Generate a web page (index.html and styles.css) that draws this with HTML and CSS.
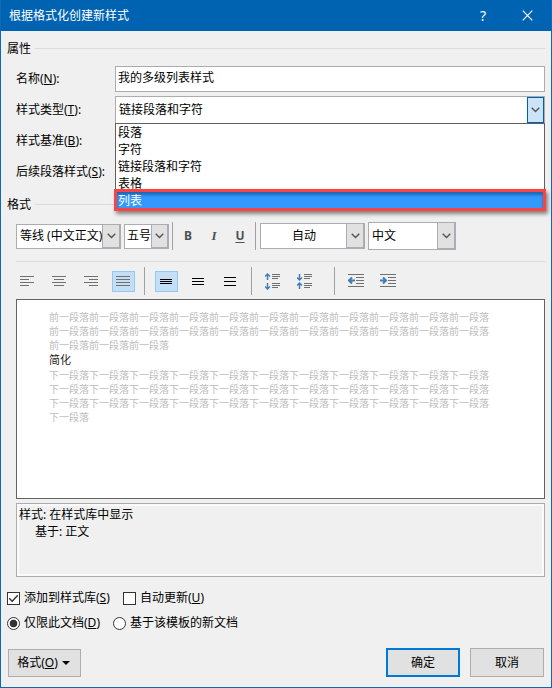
FILE: index.html
```html
<!DOCTYPE html>
<html lang="zh-CN">
<head>
<meta charset="utf-8">
<title>根据格式化创建新样式</title>
<link rel="stylesheet" href="styles.css">
</head>
<body>
<main class="dialog">
  <header class="titlebar">
    <span class="title">根据格式化创建新样式</span>
    <span class="help">?</span>
    <svg class="close" width="11" height="11" viewBox="0 0 11 11"><path d="M.7.7l9.6 9.6M10.3.7L.7 10.3"/></svg>
  </header>

  <div class="group group-props"><span>属性</span><i></i></div>
  <div class="fields">
    <label>名称(<u>N</u>):</label>
    <div class="input">我的多级列表样式</div>
    <label class="type-label">样式类型(<u>T</u>):</label>
    <div class="select">
      <span>链接段落和字符</span>
      <b class="drop"><svg width="9" height="6" viewBox="0 0 9 6"><path d="M.7.8l3.8 3.8L8.3.8"/></svg></b>
      <ul class="menu">
        <li>段落</li><li>字符</li><li>链接段落和字符</li><li>表格</li>
        <li class="chosen">列表</li>
      </ul>
    </div>
    <label class="lower">样式基准(<u>B</u>):</label>
    <label class="lower">后续段落样式(<u>S</u>):</label>
  </div>

  <div class="group group-format"><span>格式</span><i></i></div>
  <div class="fontbar">
    <div class="combo c-font"><span>等线 (中文正文)</span><b><svg width="9" height="6" viewBox="0 0 9 6"><path d="M.7.8l3.8 3.8L8.3.8"/></svg></b></div>
    <div class="combo c-size"><span>五号</span><b><svg width="9" height="6" viewBox="0 0 9 6"><path d="M.7.8l3.8 3.8L8.3.8"/></svg></b></div>
    <i class="sep"></i>
    <span class="fmt bold">B</span><span class="fmt italic">I</span><span class="fmt under">U</span>
    <i class="sep sep-two"></i>
    <div class="combo c-color"><span>自动</span><b><svg width="9" height="6" viewBox="0 0 9 6"><path d="M.7.8l3.8 3.8L8.3.8"/></svg></b></div>
    <div class="combo c-lang"><span>中文</span><b><svg width="9" height="6" viewBox="0 0 9 6"><path d="M.7.8l3.8 3.8L8.3.8"/></svg></b></div>
  </div>

  <div class="rule"></div>
  <div class="parabar">
    <span class="tool"><svg class="g" width="14" height="12"><path d="M0 1.5h14M0 4.5h9M0 7.5h14M0 10.5h9"/></svg></span>
    <span class="tool"><svg class="g" width="14" height="12"><path d="M0 1.5h14M2 4.5h10M0 7.5h14M2 10.5h10"/></svg></span>
    <span class="tool"><svg class="g" width="14" height="12"><path d="M0 1.5h14M5 4.5h9M0 7.5h14M5 10.5h9"/></svg></span>
    <span class="tool on"><svg class="g" width="14" height="12"><path d="M0 1.5h14M0 4.5h14M0 7.5h14M0 10.5h14"/></svg></span>
    <i class="sep"></i>
    <span class="tool on"><svg class="k" width="12" height="12"><path d="M0 4.5h12M0 6.5h12M0 8.5h12"/></svg></span>
    <span class="tool"><svg class="k" width="12" height="12"><path d="M0 3.5h12M0 6.5h12M0 9.5h12"/></svg></span>
    <span class="tool"><svg class="k" width="12" height="12"><path d="M0 2.5h12M0 6.5h12M0 10.5h12"/></svg></span>
    <i class="sep"></i>
    <span class="tool"><svg class="g" width="16" height="17"><path d="M7 1.5h8M7 3.5h8M7 5.5h6M7 10.5h8M7 12.5h8M7 14.5h6"/><path class="blue" d="M2.500 1v6M0 3.500L2.500 1 5 3.500M2.500 10v6M0 13.500L2.500 16 5 13.500"/></svg></span>
    <span class="tool"><svg class="g" width="16" height="17"><path d="M7 1.5h8M7 3.5h8M7 5.5h6M7 10.5h8M7 12.5h8M7 14.5h6"/><path class="blue" d="M2.500 1v6M0 4.500L2.500 7 5 4.500M2.500 10v6M0 12.500L2.500 10 5 12.500"/></svg></span>
    <i class="sep sep-last"></i>
    <span class="tool"><svg class="g" width="16" height="14"><path d="M0 .5h16M8 3.500h8M8 6.500h8M8 9.500h8M0 12.500h16"/><path class="blue thick" d="M7 6.500H1.500M4 3.500l-3 3 3 3"/></svg></span>
    <span class="tool"><svg class="g" width="16" height="14"><path d="M0 .5h16M8 3.500h8M8 6.500h8M8 9.500h8M0 12.500h16"/><path class="blue thick" d="M0 6.500h5.500M3 3.500l3 3-3 3"/></svg></span>
  </div>

  <section class="preview">
    <p>前一段落前一段落前一段落前一段落前一段落前一段落前一段落前一段落前一段落前一段落前一段落前一段落前一段落前一段落前一段落前一段落前一段落前一段落前一段落前一段落前一段落前一段落前一段落前一段落前一段落</p>
    <p class="sample">简化</p>
    <p>下一段落下一段落下一段落下一段落下一段落下一段落下一段落下一段落下一段落下一段落下一段落下一段落下一段落下一段落下一段落下一段落下一段落下一段落下一段落下一段落下一段落下一段落下一段落下一段落下一段落下一段落下一段落下一段落下一段落下一段落下一段落下一段落下一段落下一段落</p>
  </section>
  <section class="desc"><p>样式: 在样式库中显示</p><p class="indent">基于: 正文</p></section>

  <div class="options">
    <span class="box"><svg width="11" height="11" viewBox="0 0 11 11"><path d="M1.200 5.300l3 3 5.600-6"/></svg></span><span class="opt first">添加到样式库(<u>S</u>)</span>
    <span class="box"></span><span class="opt">自动更新(<u>U</u>)</span>
  </div>
  <div class="options radios">
    <span class="radio checked"></span><span class="opt first">仅限此文档(<u>D</u>)</span>
    <span class="radio"></span><span class="opt">基于该模板的新文档</span>
  </div>

  <footer class="buttons">
    <div class="btn format">格式(<u>O</u>)<i class="caret"></i></div>
    <div class="btn ok">确定</div>
    <div class="btn cancel">取消</div>
  </footer>
</main>
</body>
</html>
```
FILE: styles.css
```css
* { box-sizing: border-box; }
body { margin: 0; font: 12px/16px "Noto Sans", "Noto Sans CJK SC", sans-serif; color: #000; }
p, ul { margin: 0; padding: 0; list-style: none; }
i { font-style: normal; }
svg { display: block; fill: none; flex: none; }
u { text-underline-offset: 1px; text-decoration-thickness: 1px; }

.dialog { width: 552px; height: 688px; background: #f0f0f0; border: 1px solid #0f68b3; border-top: 0; overflow: hidden; }
.titlebar { height: 31px; background: #0063b1; color: #fff; display: flex; align-items: center; padding: 0 18px 0 8px; }
.title { flex: 1; }
.help { font-size: 14px; margin-right: 36px; }
.close { stroke: #fff; stroke-width: 1.2; }

.group { display: flex; align-items: center; height: 16px; padding: 0 6px; }
.group i { flex: 1; height: 1px; background: #dcdcdc; margin: -1px 0 0 4px; }
.group-props { margin-top: 10px; }
.group-format { margin-top: 11px; }

.fields { display: grid; grid-template-columns: 99px 430px; grid-template-rows: 26px 32px 31px 31px; margin: 9px 0 0 15px; align-items: center; white-space: nowrap; }
.input { height: 26px; border: 1px solid #ababb0; background: #fff; padding: 3px 2px; }
.type-label { padding-top: 4px; }
.lower { grid-column: 1; padding-top: 3px; }
.select { position: relative; height: 28px; align-self: end; border: 1px solid #ababb0; background: #fff; display: flex; align-items: center; padding-left: 3px; }
.select > span { flex: 1; }
.drop { width: 17px; height: 26px; border: 1px solid #0060ac; background: #cce4f7; display: flex; align-items: center; justify-content: center; }
.drop path, .combo path { stroke: #555; stroke-width: 1.4; }
.menu { position: absolute; left: -1px; top: 26px; width: 430px; height: 88px; border: 1px solid #606060; border-bottom: 0; background: #fff; z-index: 2; }
.menu li { height: 17px; line-height: 17px; padding-left: 2px; }
.menu .chosen { height: 22px; width: 432px; margin: -3px 0 0 -2px; padding-left: 1px; line-height: 17px; border: 3px solid #fc4343; background: #3399ff; color: #fff; box-shadow: 2px 3px 4px #0007, inset 0 3px 3px #1d68b5; }

.fontbar { display: flex; align-items: center; height: 30px; margin: 8px 0 0 15px; }
.combo { display: flex; border: 1px solid #acacb2; background: #fff; overflow: hidden; white-space: nowrap; height: 25px; align-items: center; }
.combo span { flex: 1; min-width: 0; overflow: hidden; padding-left: 3px; }
.combo b { width: 18px; align-self: stretch; border: 1px solid #acacb2; border-width: 0 1px 1px 1px; background: #e1e1e1; display: flex; align-items: center; justify-content: center; }
.c-font { width: 105px; margin-right: 3px; }
.c-size { width: 45px; }
.c-size span { padding-left: 2px; }
.c-size b { width: 17px; }
.c-color { width: 105px; height: 26px; margin: 0 3px 0 4px; }
.c-color span { padding-left: 31px; }
.c-lang { width: 88px; height: 28px; }
.sep { width: 1px; height: 28px; background: #a0a0a0; flex: none; }
.fontbar .sep { margin-left: 3px; }
.fontbar .sep-two { margin-left: 2px; }
.fmt { width: 26px; text-align: center; color: #505050; font-weight: 700; }
.fmt.bold { margin-left: 2px; }
.italic { font: italic 700 13px "Liberation Serif", serif; }
.under { text-decoration: underline; text-underline-offset: 2px; text-decoration-thickness: 1px; }

.rule { height: 1px; background: #dcdcdc; margin: 10px 6px 0 15px; }
.parabar { display: flex; align-items: center; height: 28px; margin: 5px 0 4px 15px; }
.tool { width: 23px; height: 21px; margin-right: 9px; padding-right: 1px; display: flex; align-items: center; justify-content: center; flex: none; }
.on { background: #c3def5; border: 1px solid #90c8f6; }
.g { stroke: #707070; }
.k { stroke: #000; }
.g .blue { stroke: #427eb6; stroke-width: 1.5; }
.g .thick { stroke-width: 2; }
.parabar .sep { margin-right: 10px; }
.parabar .sep-last { margin-left: 8px; }

.preview { height: 200px; margin: 0 6px 0 15px; border: 1px solid #636363; background: #fff; padding: 10px 54px 0 32px; font-size: 10px; line-height: 14px; color: #bdbdbd; word-break: break-all; }
.preview .sample { color: #222; font-size: 11px; line-height: 16px; }
.desc { height: 74px; margin: 4px 6px 0 15px; border: 1px solid #ababb0; box-shadow: inset 0 0 0 2px #fafafa; padding: 2px 2px; line-height: 17px; }
.indent { padding-left: 16px; }

.options { display: flex; align-items: center; height: 16px; margin: 13px 0 0 6px; }
.radios { margin-top: 9px; }
.box, .radio { width: 13px; height: 13px; border: 1px solid #333; background: #fff; flex: none; }
.box path { stroke: #333; stroke-width: 1.4; }
.radio { border-radius: 50%; }
.checked { background: radial-gradient(circle, #333 3.5px, #fff 4.2px); }
.opt { margin-left: 4px; white-space: nowrap; }
.first { width: 99px; }
.radios .first { width: 89px; }

.buttons { display: flex; margin: 17px 7px 0 7px; height: 29px; align-items: flex-end; }
.btn { width: 74px; height: 29px; border: 1px solid #adadad; background: #e1e1e1; display: flex; align-items: center; justify-content: center; }
.format { width: 73px; height: 28px; margin-right: auto; padding-right: 2px; }
.caret { border: 4px solid transparent; border-top-color: #000; border-bottom: 0; margin-left: 4px; }
.ok { border: 2px solid #0078d7; margin-right: 10px; }
```
